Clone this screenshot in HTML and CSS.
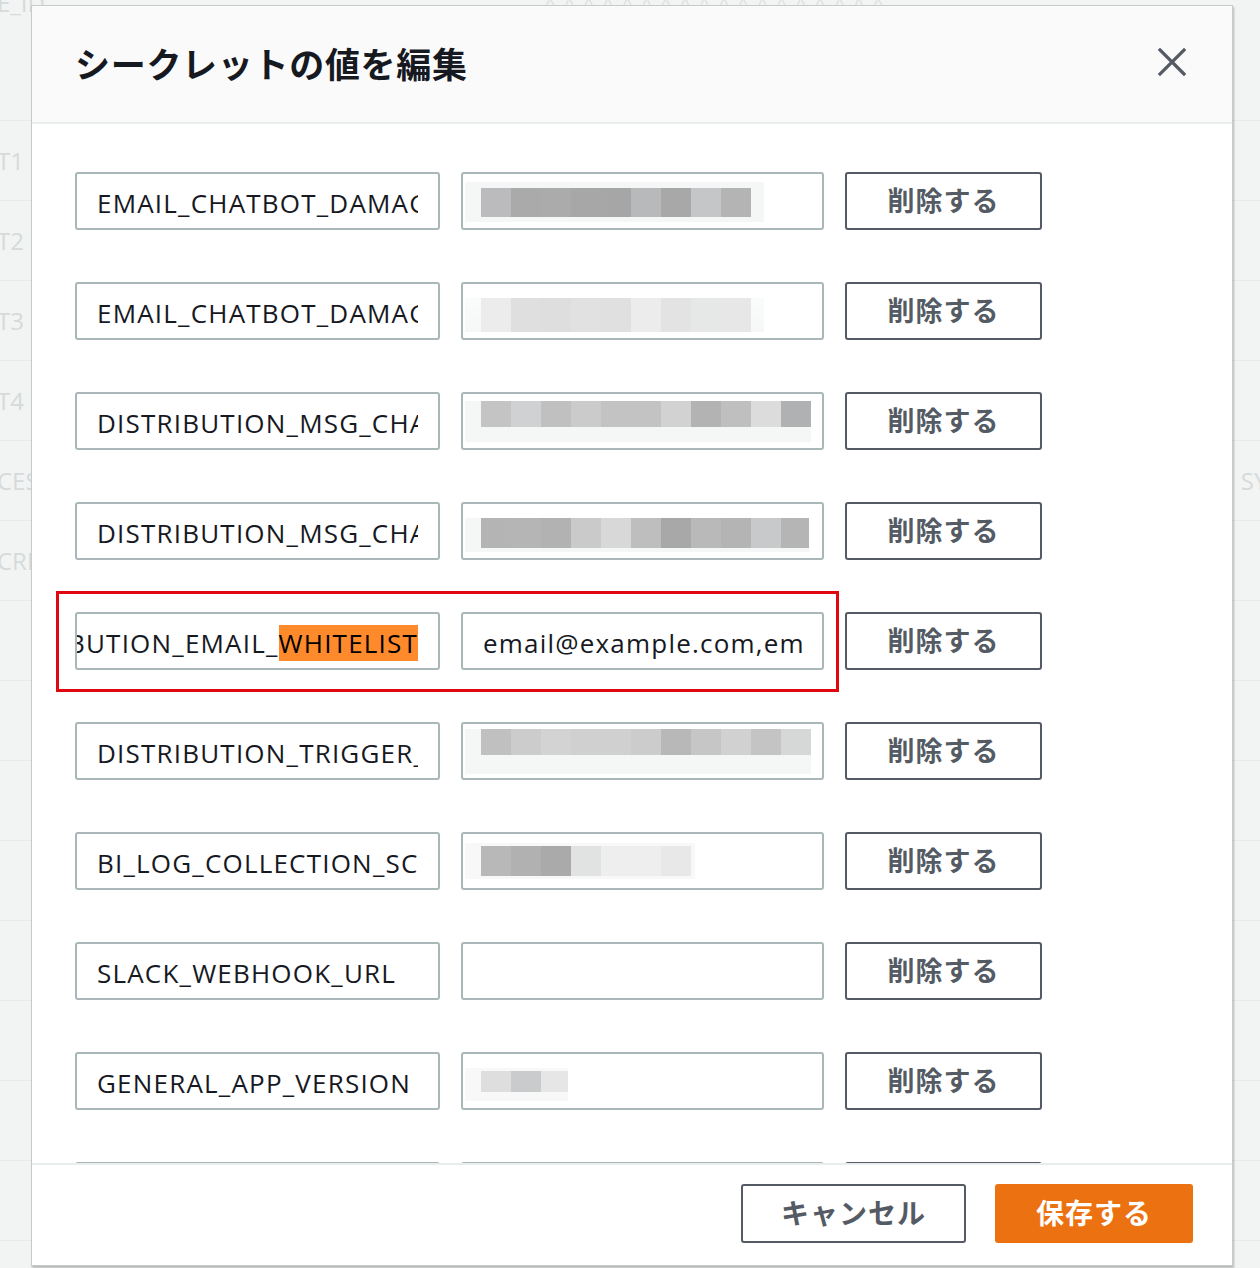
FILE: index.html
```html
<!DOCTYPE html>
<html lang="ja">
<head>
<meta charset="utf-8">
<title>シークレットの値を編集</title>
<link rel="stylesheet" href="styles.css">
</head>
<body>
<div class="backdrop">
  <div class="bg-head"><span class="bg-left">E_ID</span><span class="bg-caret">^^^^^^^^^^^^^^^^^^</span></div>
  <div class="bg-row"><span class="bg-left">T1</span></div>
  <div class="bg-row"><span class="bg-left">T2</span></div>
  <div class="bg-row"><span class="bg-left">T3</span></div>
  <div class="bg-row"><span class="bg-left">T4</span></div>
  <div class="bg-row"><span class="bg-left">CES</span><span class="bg-right">SYI</span></div>
  <div class="bg-row"><span class="bg-left">CRI</span></div>
  <div class="bg-row"></div>
  <div class="bg-row"></div>
  <div class="bg-row"></div>
  <div class="bg-row"></div>
  <div class="bg-row"></div>
  <div class="bg-row"></div>
  <div class="bg-row"></div>
  <div class="bg-row"></div>
</div>

<div class="modal">
  <div class="modal-header">
    <h1 class="title">シークレットの値を編集</h1>
    <button class="close" aria-label="閉じる">
      <svg width="28" height="28" viewBox="0 0 28 28"><path d="M2 2 L26 26 M26 2 L2 26" stroke="#545b64" stroke-width="3.2" stroke-linecap="square" fill="none"/></svg>
    </button>
  </div>

  <div class="modal-body">
    <div class="row">
      <div class="field key"><span class="txt">EMAIL_CHATBOT_DAMAGE_NOTIFY</span></div>
      <div class="field val">
        <div class="mosaic m1">
          <div class="strip"><i class="c1"></i><i class="c2"></i><i class="c3"></i><i class="c4"></i><i class="c5"></i><i class="c6"></i><i class="c7"></i><i class="c8"></i><i class="c9"></i></div>
        </div>
      </div>
      <button class="del">削除する</button>
    </div>

    <div class="row">
      <div class="field key"><span class="txt">EMAIL_CHATBOT_DAMAGE_REPORT</span></div>
      <div class="field val">
        <div class="mosaic m2">
          <div class="strip"><i class="l1"></i><i class="l2"></i><i class="l3"></i><i class="l4"></i><i class="l5"></i><i class="l6"></i><i class="l7"></i><i class="l8"></i><i class="l9"></i></div>
        </div>
      </div>
      <button class="del">削除する</button>
    </div>

    <div class="row">
      <div class="field key"><span class="txt">DISTRIBUTION_MSG_CHANNEL</span></div>
      <div class="field val">
        <div class="mosaic m3">
          <div class="strip"><i class="a1"></i><i class="a2"></i><i class="a3"></i><i class="a4"></i><i class="a5"></i><i class="a5"></i><i class="a6"></i><i class="a7"></i><i class="a8"></i><i class="a9"></i><i class="a10"></i></div>
          <div class="under"></div>
        </div>
      </div>
      <button class="del">削除する</button>
    </div>

    <div class="row">
      <div class="field key"><span class="txt">DISTRIBUTION_MSG_CHANNEL_ID</span></div>
      <div class="field val">
        <div class="mosaic m4">
          <div class="strip"><i class="b1"></i><i class="b2"></i><i class="b3"></i><i class="b4"></i><i class="b5"></i><i class="b6"></i><i class="b7"></i><i class="b8"></i><i class="b9"></i><i class="b10"></i><i class="b11"></i></div>
        </div>
      </div>
      <button class="del">削除する</button>
    </div>

    <div class="row">
      <div class="field key end"><span class="txt">DISTRIBUTION_EMAIL_<span class="hl">WHITELIST</span></span></div>
      <div class="field val"><span class="txt">email@example.com,email2@example.com</span></div>
      <button class="del">削除する</button>
      <div class="callout"></div>
    </div>

    <div class="row">
      <div class="field key"><span class="txt">DISTRIBUTION_TRIGGER_TIME</span></div>
      <div class="field val">
        <div class="mosaic m6">
          <div class="strip"><i class="d1"></i><i class="d2"></i><i class="d3"></i><i class="d4"></i><i class="d4"></i><i class="d2"></i><i class="d5"></i><i class="d6"></i><i class="d7"></i><i class="d8"></i><i class="d9"></i></div>
          <div class="under"></div>
        </div>
      </div>
      <button class="del">削除する</button>
    </div>

    <div class="row">
      <div class="field key"><span class="txt">BI_LOG_COLLECTION_SCHEDULE</span></div>
      <div class="field val">
        <div class="mosaic m7">
          <div class="strip"><i class="e1"></i><i class="e2"></i><i class="e3"></i><i class="e4"></i><i class="e5"></i><i class="e5"></i><i class="e6"></i></div>
        </div>
      </div>
      <button class="del">削除する</button>
    </div>

    <div class="row">
      <div class="field key"><span class="txt">SLACK_WEBHOOK_URL</span></div>
      <div class="field val"></div>
      <button class="del">削除する</button>
    </div>

    <div class="row">
      <div class="field key"><span class="txt">GENERAL_APP_VERSION</span></div>
      <div class="field val">
        <div class="mosaic m9">
          <div class="strip"><i class="f1"></i><i class="f2"></i><i class="f3"></i></div>
        </div>
      </div>
      <button class="del">削除する</button>
    </div>

    <div class="row row-hidden">
      <div class="field key"></div>
      <div class="field val"></div>
      <div class="del del-empty"></div>
    </div>
  </div>

  <div class="modal-footer">
    <button class="btn cancel">キャンセル</button>
    <button class="btn save">保存する</button>
  </div>
</div>
</body>
</html>
```

FILE: styles.css
```css
html, body {
  margin: 0;
  padding: 0;
}
body {
  width: 1260px;
  height: 1268px;
  overflow: hidden;
  background: #f2f3f3;
  font-family: "Noto Sans", "Noto Sans CJK JP", sans-serif;
  position: relative;
}

/* background page */
.backdrop {
  display: flex;
  flex-direction: column;
}
.bg-head {
  height: 120px;
  border-bottom: 1px solid #e9ebeb;
  position: relative;
  display: flex;
  align-items: flex-start;
}
.bg-head .bg-left {
  margin-top: -14px;
}
.bg-caret {
  margin-left: 500px;
  margin-top: -8px;
  color: #dcdfdf;
  font-size: 18px;
  letter-spacing: 9px;
}
.bg-row {
  height: 79px;
  border-bottom: 1px solid #e9ebeb;
  display: flex;
  align-items: center;
  justify-content: space-between;
}
.bg-left, .bg-right {
  font-family: "Open Sans", sans-serif;
  font-size: 24px;
  color: #d6dada;
}
.bg-left {
  margin-left: -3px;
}
.bg-right {
  margin-right: -14px;
}

/* modal */
.modal {
  position: absolute;
  left: 31px;
  top: 5px;
  width: 1200px;
  height: 1259px;
  background: #ffffff;
  border: 1px solid #c6cccc;
  box-shadow: 1px 2px 2px rgba(0, 0, 0, 0.25);
  display: flex;
  flex-direction: column;
  overflow: hidden;
}
.modal-header {
  flex: none;
  background: #fafafa;
  border-bottom: 2px solid #eaeded;
  display: flex;
  align-items: center;
  justify-content: space-between;
  padding: 0 46px 4px 43px;
  box-sizing: border-box;
  height: 118px;
}
.title {
  margin: 0;
  font-family: "Noto Sans CJK JP", sans-serif;
  font-weight: 700;
  font-size: 35px;
  color: #16191f;
  letter-spacing: 0.7px;
}
.close {
  border: 0;
  background: none;
  padding: 0;
  width: 28px;
  height: 28px;
  display: flex;
}

.modal-body {
  flex: 1;
  overflow: hidden;
  padding: 48px 0 0 43px;
  display: flex;
  flex-direction: column;
  gap: 52px;
}
.row {
  display: flex;
  gap: 21px;
  height: 58px;
  flex: none;
  position: relative;
}
.field {
  box-sizing: border-box;
  height: 58px;
  border: 2px solid #aab7b8;
  border-radius: 3px;
  display: flex;
  align-items: center;
  overflow: hidden;
  padding: 0 20px;
  background: #fff;
  white-space: nowrap;
}
.field.key { width: 365px; }
.field.val { width: 363px; padding: 0 0 0 2px; }
.field.val > .txt { margin-left: 18px; max-width: 321px; }
.field.end { justify-content: flex-end; padding: 0 20px 0 0; }
.txt {
  font-family: "Open Sans", sans-serif;
  font-size: 26px;
  color: #16191f;
  letter-spacing: 1.2px;
  display: block;
  overflow: hidden;
  flex: none;
  padding-top: 3px;
}
.field.key .txt { max-width: 321px; }
.field.end .txt { max-width: none; }
.hl {
  background: #ff8a2b;
  color: #000;
}
.del {
  box-sizing: border-box;
  width: 197px;
  height: 58px;
  border: 2px solid #545b64;
  border-radius: 3px;
  background: #fff;
  font-family: "Noto Sans CJK JP", sans-serif;
  font-weight: 700;
  font-size: 27px;
  color: #545b64;
  padding: 0 0 3px;
  letter-spacing: 1px;
}
.callout {
  position: absolute;
  left: -19px;
  top: -21px;
  width: 783px;
  height: 101px;
  box-sizing: border-box;
  border: 3px solid #e0070e;
  pointer-events: none;
}

/* pixelated blurred values */
.mosaic {
  background: #f5f6f6;
  padding: 6px 12px 0 16px;
  display: flex;
  flex-direction: column;
}
.strip {
  display: flex;
}
.strip i {
  display: block;
  width: 30px;
  height: 30px;
}
.under {
  height: 15px;
}
.m1 { width: 271px; padding-bottom: 5px; margin-top: 2px; }
.m1 .strip i { height: 29px; }
.m2 { width: 271px; margin-top: 8px; padding-top: 0; background: linear-gradient(#fafbfb, #f6f7f7); }
.m2 .strip i { height: 34px; }
.m3 { width: 330px; margin-top: 0; padding: 0 0 0 16px; }
.m3 .strip i { height: 26px; }
.m4 { width: 328px; margin-top: 8px; padding: 0 0 4px 16px; }
.m4 .strip i { height: 30px; }
.m4 .strip i:last-child { width: 28px; }
.m6 { width: 330px; margin-top: 0; padding: 0 0 0 16px; }
.m6 .strip i { height: 26px; }
.m6 .under { height: 19px; }
.m7 { width: 214px; padding: 3px 0 3px 16px; background: #f8f8f8; }
.m7 .strip i { height: 30px; }
.m9 { width: 87px; padding: 3px 0 9px 16px; margin-top: 6px; background: #f8f8f8; }
.m9 .strip i { height: 21px; }
.m9 .strip i:last-child { width: 27px; }

.c1 { background: #bbbbbd; } .c2 { background: #aaaaab; } .c3 { background: #ababab; }
.c4 { background: #a7a7a8; } .c5 { background: #a6a6a7; } .c6 { background: #b8b9ba; }
.c7 { background: #a8a8a9; } .c8 { background: #c5c6c7; } .c9 { background: #b4b4b5; }

.l1 { background: #ececec; } .l2 { background: #dfdfdf; } .l3 { background: #dedede; }
.l4 { background: #e1e1e1; } .l5 { background: #e0e0e0; } .l6 { background: #ececec; }
.l7 { background: #e3e3e3; } .l8 { background: #e6e7e7; } .l9 { background: #e7e7e7; }

.a1 { background: #c4c4c4; } .a2 { background: #d0d1d2; } .a3 { background: #c0c0c1; }
.a4 { background: #cbcbcb; } .a5 { background: #c3c3c3; } .a6 { background: #d2d2d2; }
.a7 { background: #b3b3b4; } .a8 { background: #bfbfbf; } .a9 { background: #dcdcdc; }
.a10 { background: #b0b1b2; }

.b1 { background: #b4b4b5; } .b2 { background: #b5b5b6; } .b3 { background: #b2b2b3; }
.b4 { background: #cacaca; } .b5 { background: #d8d8d9; } .b6 { background: #bebebe; }
.b7 { background: #a8a8a9; } .b8 { background: #b9b9ba; } .b9 { background: #b4b4b5; }
.b10 { background: #c8c9ca; } .b11 { background: #b5b5b6; }

.d1 { background: #c0c0c1; } .d2 { background: #cccccc; } .d3 { background: #d3d3d3; }
.d4 { background: #d0d0d0; } .d5 { background: #b8b8b9; } .d6 { background: #c6c6c7; }
.d7 { background: #d1d1d1; } .d8 { background: #c4c4c5; } .d9 { background: #d6d7d7; }

.e1 { background: #b8b8b9; } .e2 { background: #b1b1b2; } .e3 { background: #aaaaab; }
.e4 { background: #e1e2e2; } .e5 { background: #eeeeee; } .e6 { background: #e8e8e8; }

.f1 { background: #dedede; } .f2 { background: #cacbcc; } .f3 { background: #e6e6e6; }

/* footer */
.modal-footer {
  flex: none;
  border-top: 2px solid #eaeded;
  background: #fff;
  display: flex;
  align-items: center;
  justify-content: flex-end;
  gap: 29px;
  padding: 0 39px 4px 0;
  box-sizing: border-box;
  height: 102px;
}
.btn {
  box-sizing: border-box;
  height: 59px;
  border-radius: 3px;
  font-family: "Noto Sans CJK JP", sans-serif;
  font-weight: 700;
  font-size: 28px;
  padding: 0 0 3px;
  letter-spacing: 1px;
}
.cancel {
  width: 225px;
  border: 2px solid #545b64;
  background: #fff;
  color: #545b64;
}
.save {
  width: 198px;
  border: 0;
  background: #ec7211;
  color: #fff;
}
```
